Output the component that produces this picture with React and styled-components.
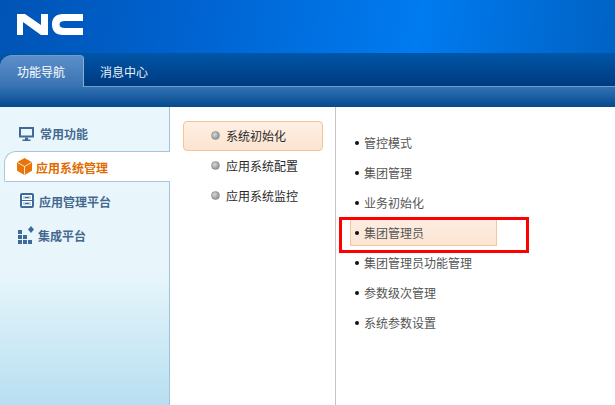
import React from "react";
import styled, { createGlobalStyle } from "styled-components";

const Global = createGlobalStyle`
  html, body { margin: 0; padding: 0; background: #fff; }
  body { font-family: "Noto Sans CJK SC", "Liberation Sans", sans-serif; font-size: 12px; }
`;

const Page = styled.div`
  position: relative;
  width: 615px;
  height: 405px;
  overflow: hidden;
  display: flex;
  flex-direction: column;
`;

const Header = styled.header`
  height: 53px;
  flex: none;
  box-sizing: border-box;
  padding: 14px 0 0 17px;
  background: linear-gradient(100deg, #0054b4 0%, #0062cf 30%, #007bf0 68%, #0062c4 100%);
`;

const TabBar = styled.nav`
  height: 33px;
  flex: none;
  display: flex;
  align-items: flex-end;
  background: linear-gradient(180deg, #0056a8 0%, #003a80 100%);
  border-bottom: 1px solid #6f9ccb;
`;

const Tab = styled.div`
  width: ${(p) => p.$w}px;
  height: ${(p) => (p.$active ? 32 : 33)}px;
  margin-bottom: ${(p) => (p.$active ? -1 : 0)}px;
  box-sizing: border-box;
  display: flex;
  align-items: center;
  padding: ${(p) => (p.$active ? "0 0 0 17px" : "4px 0 0 16px")};
  color: #fff;
  font-size: 12px;
  opacity: ${(p) => (p.$active ? 1 : 0.92)};
  position: relative;
  border-radius: ${(p) => (p.$active ? "12px 4px 0 0" : "0")};
  background: ${(p) => (p.$active ? "linear-gradient(180deg, #5b8fc9 0%, #3a72b2 100%)" : "transparent")};
  border-top: ${(p) => (p.$active ? "1px solid #6f9ccb" : "none")};
  border-right: ${(p) => (p.$active ? "1px solid #86aed6" : "none")};
`;

const Strip = styled.div`
  height: 20px;
  flex: none;
  background: linear-gradient(180deg, #3272b4 0%, #044a8e 100%);
`;

const Body = styled.main`
  flex: 1;
  display: flex;
  min-height: 0;
`;

const Sidebar = styled.aside`
  width: 169px;
  flex: none;
  border-right: 1px solid #a0c2da;
  padding-top: 10px;
  background: linear-gradient(180deg, #e9f7fc 0%, #e8f6fb 55%, #b7dff1 100%);
  display: flex;
  flex-direction: column;
`;

const NavItem = styled.div`
  display: flex;
  align-items: center;
  flex: none;
  height: ${(p) => p.$h}px;
  padding-left: ${(p) => p.$pad}px;
  gap: ${(p) => p.$gap}px;
  font-size: 12px;
  font-weight: 700;
  color: #44688f;
`;

const ActiveNav = styled.div`
  display: flex;
  align-items: center;
  flex: none;
  box-sizing: border-box;
  height: 31px;
  margin: 2px -1px 0 4px;
  padding: 2px 0 0 12px;
  gap: 4px;
  font-size: 12px;
  font-weight: 700;
  color: #e06c00;
  background: #fff;
  border: 1px solid #a9c6dc;
  border-right: none;
  border-radius: 12px 0 0 2px;
`;

const MiddleColumn = styled.section`
  width: 165px;
  flex: none;
  border-right: 1px solid #c4c4c4;
  padding-top: 14px;
  display: flex;
  flex-direction: column;
  align-items: flex-start;
`;

const SubItem = styled.div`
  width: 140px;
  height: 30px;
  margin-left: 13px;
  box-sizing: border-box;
  display: flex;
  align-items: center;
  padding: 0 0 2px 27px;
  gap: 6px;
  color: #2a2a2a;
  font-size: 12px;
  border: 1px solid ${(p) => (p.$active ? "#f4c397" : "transparent")};
  border-radius: 4px;
  background: ${(p) => (p.$active ? "linear-gradient(180deg, #fff0e3 0%, #fbe4d0 100%)" : "transparent")};
`;

const Dot = styled.span`
  width: 7px;
  height: 7px;
  border-radius: 50%;
  flex: none;
  background: radial-gradient(circle at 35% 35%, #d8d8d8, #7d7d7d);
  border: 0.5px solid #999;
`;

const RightColumn = styled.section`
  flex: 1;
  padding: 22px 0 0 14px;
  display: flex;
  flex-direction: column;
  gap: 3px;
`;

const Link = styled.div`
  width: 147px;
  height: 27px;
  box-sizing: border-box;
  display: flex;
  align-items: center;
  padding-left: 4px;
  white-space: nowrap;
  gap: 5px;
  color: #555;
  font-size: 12px;
  border-bottom: 1px solid ${(p) => (p.$active ? "#f1c6a0" : "transparent")};
  border-left: 1px solid ${(p) => (p.$active ? "#f1c6a0" : "transparent")};
  border-right: 1px solid ${(p) => (p.$active ? "#f1c6a0" : "transparent")};
  background: ${(p) => (p.$active ? "linear-gradient(180deg, #fdeee2 0%, #fbe4d2 100%)" : "transparent")};
`;

const Bullet = styled.span`
  width: 4px;
  height: 4px;
  margin-top: 1px;
  border-radius: 50%;
  background: #111;
  flex: none;
`;

const Callout = styled.div`
  position: absolute;
  left: 339px;
  top: 217px;
  width: 190px;
  height: 36px;
  box-sizing: border-box;
  border: 3px solid #f00;
  pointer-events: none;
`;

const IconSvg = styled.svg`
  display: block;
  flex: none;
  margin-top: ${(p) => p.$lift || 0}px;
`;

const Logo = () => (
  <IconSvg width="67" height="21" viewBox="0 0 67 21">
    <path fill="#fff" d="M0 0H8L24 11V0H31V21H24L6 8V21H0Z" />
    <path fill="#fff" d="M66 0H46C39 0 35 4 35 10.500C35 17 39 21 46 21H66V14H48C44.500 14 42.500 13 42.500 10.500C42.500 8 44.500 7 48 7H66Z" />
  </IconSvg>
);

const Monitor = () => (
  <IconSvg width="15" height="14" viewBox="0 0 15 14" $lift={1}>
    <path fill="#3d6a98" fillRule="evenodd" d="M0 0H15V10.500H0ZM2 2V8.500H13V2Z" />
    <path fill="#3d6a98" d="M6 10.500H9V12.500H11.500V14H3.500V12.500H6Z" />
  </IconSvg>
);

const Cube = () => (
  <IconSvg width="15" height="17" viewBox="0 0 15 17" $lift={-3}>
    <path fill="#e8750a" d="M7.500 0L15 4.200V12.800L7.500 17L0 12.800V4.200Z" />
    <path fill="none" stroke="#fff" strokeWidth="0.8" d="M0.500 4.500L7.500 8.500L14.500 4.500M7.500 8.500V16.500" />
  </IconSvg>
);

const Panel = () => (
  <IconSvg width="14" height="15" viewBox="0 0 14 15" $lift={-2}>
    <rect width="14" height="15" rx="2" fill="#3d6a98" />
    <rect x="2.500" y="2.500" width="9" height="4" fill="#bcd3e6" stroke="#fff" strokeWidth="1" />
    <rect x="2.500" y="8.500" width="9" height="4" fill="#bcd3e6" stroke="#fff" strokeWidth="1" />
    <path fill="#3d6a98" d="M5 4H9V5H5ZM5 10H9V11H5Z" />
  </IconSvg>
);

const Blocks = () => (
  <IconSvg width="16" height="18" viewBox="0 0 16 18">
    <path fill="#3d6a98" d="M0 4H4V8H0ZM0 9H4V13H0ZM5 9H9V13H5ZM0 14H4V18H0ZM5 14H9V18H5ZM10 14H14V18H10ZM13 0L16 3.500L13 7L10 3.500Z" />
  </IconSvg>
);

const subItems = ["系统初始化", "应用系统配置", "应用系统监控"];
const links = ["管控模式", "集团管理", "业务初始化", "集团管理员", "集团管理员功能管理", "参数级次管理", "系统参数设置"];

export default function App() {
  return (
    <Page>
      <Global />
      <Header>
        <Logo />
      </Header>
      <TabBar>
        <Tab $w={84} $active>功能导航</Tab>
        <Tab $w={80}>消息中心</Tab>
      </TabBar>
      <Strip />
      <Body>
        <Sidebar>
          <NavItem $pad={19} $gap={6} $h={32}>
            <Monitor />
            常用功能
          </NavItem>
          <ActiveNav>
            <Cube />
            应用系统管理
          </ActiveNav>
          <NavItem $pad={20} $gap={5} $h={39}>
            <Panel />
            应用管理平台
          </NavItem>
          <NavItem $pad={18} $gap={4} $h={28}>
            <Blocks />
            集成平台
          </NavItem>
        </Sidebar>
        <MiddleColumn>
          {subItems.map((t, i) => (
            <SubItem key={t} $active={i === 0}>
              <Dot />
              {t}
            </SubItem>
          ))}
        </MiddleColumn>
        <RightColumn>
          {links.map((t, i) => (
            <Link key={t} $active={i === 3}>
              <Bullet />
              {t}
            </Link>
          ))}
        </RightColumn>
      </Body>
      <Callout />
    </Page>
  );
}
